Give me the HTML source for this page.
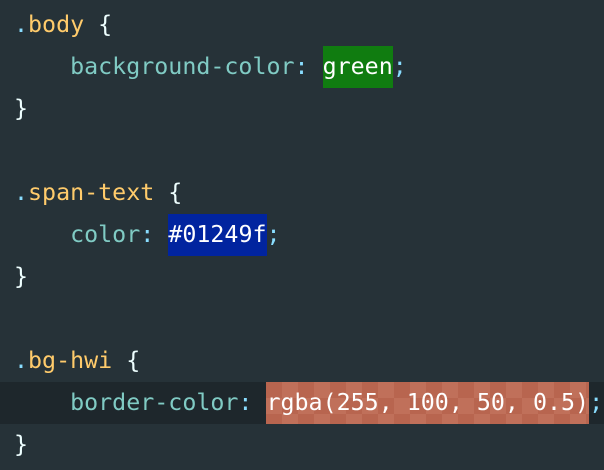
<!DOCTYPE html>
<html><head><meta charset="utf-8"><style>
html,body{margin:0;padding:0;}
body{width:604px;height:470px;background:#263238;overflow:hidden;position:relative;
font-family:"DejaVu Sans Mono","Liberation Mono",monospace;font-size:23.3px;}
.l{position:absolute;left:14px;height:42px;line-height:42px;white-space:pre;color:#eeffff;}
.cur{position:absolute;left:0;width:604px;top:382px;height:42px;background:#1e272c;}
.d{color:#89ddff}.s{color:#ffcb6b}.p{color:#80cbc4}.b{color:#eeffff}
.g{background:#107c10;color:#fff;display:inline-block;height:42px}
.bl{background:#01249f;color:#fff;display:inline-block;height:42px}
.r{color:#fff;display:inline-block;height:42px;background-color:#b8654f;
background-image:linear-gradient(45deg,#c0705a 25%,transparent 25%,transparent 75%,#c0705a 75%),linear-gradient(45deg,#c0705a 25%,transparent 25%,transparent 75%,#c0705a 75%);
background-size:32px 32px;background-position:0 0,16px 16px;}
</style></head><body>
<div class="cur"></div>
<div class="l" style="top:4px"><span class="d">.</span><span class="s">body</span> <span class="b">{</span></div>
<div class="l" style="top:46px">    <span class="p">background-color</span><span class="d">:</span> <span class="g">green</span><span class="d">;</span></div>
<div class="l" style="top:88px">}</div>
<div class="l" style="top:172px"><span class="d">.</span><span class="s">span-text</span> <span class="b">{</span></div>
<div class="l" style="top:214px">    <span class="p">color</span><span class="d">:</span> <span class="bl">#01249f</span><span class="d">;</span></div>
<div class="l" style="top:256px">}</div>
<div class="l" style="top:340px"><span class="d">.</span><span class="s">bg-hwi</span> <span class="b">{</span></div>
<div class="l" style="top:382px">    <span class="p">border-color</span><span class="d">:</span> <span class="r">rgba(255, 100, 50, 0.5)</span><span class="d">;</span></div>
<div class="l" style="top:424px">}</div>
</body></html>
